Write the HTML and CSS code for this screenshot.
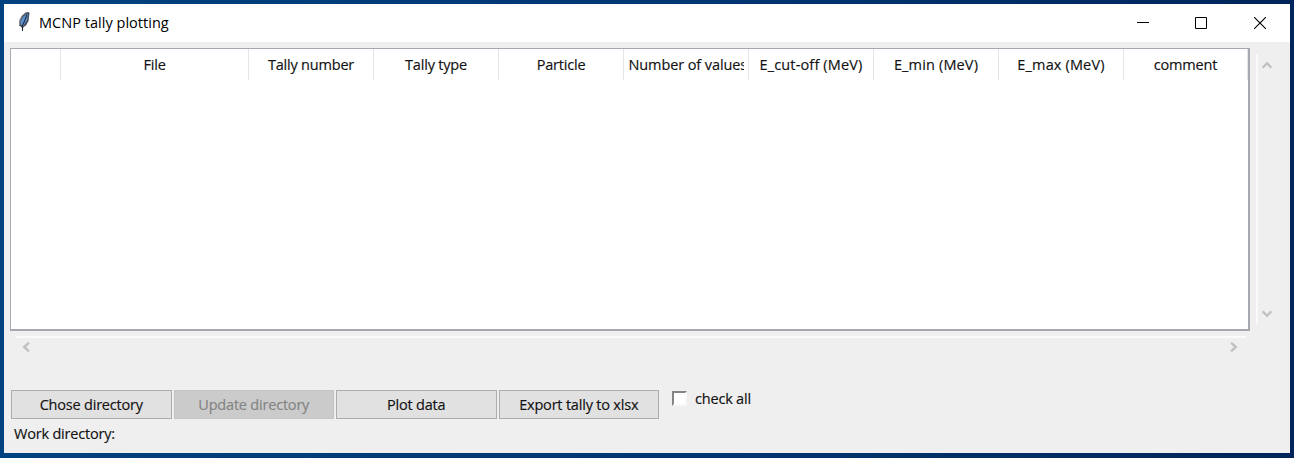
FILE: index.html
```html
<!DOCTYPE html>
<html lang="en">
<head>
<meta charset="utf-8">
<title>MCNP tally plotting</title>
<link rel="stylesheet" href="styles.css">
</head>
<body>
<div class="window">
  <header class="titlebar">
    <svg class="feather" width="16" height="22" viewBox="0 0 16 22">
      <path d="M10 1.5 L12.5 1 L13.5 2 L12.5 10 L10 14.5 L7.5 16 L6.5 20 L5.5 16 L3 14.5 L3.5 9 L6 4.5Z" fill="#454b55"/>
      <path d="M10.5 3 L12 3 L11 9.5 L7.5 14.5 L4.5 13.5 L5 9.5 L7.5 5.5Z" fill="#5b91cf"/>
      <path d="M11 3.5 L9 9 L6.5 14.5 L6.5 20" fill="none" stroke="#142033" stroke-width="1"/>
      <path d="M3.5 14 L4 9 L6.5 4.5 L10 1.5" fill="none" stroke="#8d9198" stroke-width="1"/>
    </svg>
    <h1 class="title">MCNP tally plotting</h1>
    <div class="controls">
      <svg width="12" height="12" viewBox="0 0 12 12"><path d="M0 5.5H12" stroke="#000"/></svg>
      <svg width="12" height="12" viewBox="0 0 12 12"><path d="M.5 .5H11.5V11.5H.5Z" fill="none" stroke="#000"/></svg>
      <svg width="12" height="12" viewBox="0 0 12 12"><path d="M0 0L12 12M12 0L0 12" stroke="#000" stroke-width="1.1"/></svg>
    </div>
  </header>
  <main class="content">
    <div class="table-area">
      <div class="table">
        <div class="head">
          <div class="col"></div>
          <div class="col">File</div>
          <div class="col">Tally number</div>
          <div class="col">Tally type</div>
          <div class="col">Particle</div>
          <div class="col"><span class="clip">Number of values</span></div>
          <div class="col energy">E_cut-off (MeV)</div>
          <div class="col energy">E_min (MeV)</div>
          <div class="col energy">E_max (MeV)</div>
          <div class="col">comment</div>
        </div>
      </div>
      <div class="vscroll">
        <svg width="10" height="8" viewBox="0 0 10 8"><path d="M.7 6.7L5 2.2L9.3 6.7" class="arrow"/></svg>
        <svg width="10" height="8" viewBox="0 0 10 8"><path d="M.7 1.3L5 5.8L9.3 1.3" class="arrow"/></svg>
      </div>
    </div>
    <div class="hscroll">
      <svg width="8" height="10" viewBox="0 0 8 10"><path d="M6.9 .7L2.2 5L6.9 9.3" class="arrow"/></svg>
      <svg width="8" height="10" viewBox="0 0 8 10"><path d="M1.1 .7L5.8 5L1.1 9.3" class="arrow"/></svg>
    </div>
    <div class="actions">
      <button class="btn">Chose directory</button>
      <button class="btn" disabled>Update directory</button>
      <button class="btn">Plot data</button>
      <button class="btn">Export tally to xlsx</button>
      <label class="check"><span class="box"></span><span>check all</span></label>
    </div>
    <div class="status">Work directory:</div>
  </main>
</div>
</body>
</html>
```
FILE: styles.css
```css
* { box-sizing: border-box; }
body {
  margin: 0;
  width: 1294px;
  height: 458px;
  padding: 4px 4px 5px;
  background: linear-gradient(90deg, #00427f, #003672 55%, #00255a);
  font: 14.5px/20px "Open Sans", "Noto Sans", sans-serif;
  letter-spacing: -0.2px;
  color: #111;
  overflow: hidden;
}
svg { display: block; flex: none; }
.window {
  height: 449px;
  background: #efefef;
}
.titlebar {
  display: flex;
  align-items: center;
  height: 38px;
  padding: 0 24px 0 12px;
  background: #fff;
}
.feather { margin-top: -2px; }
.title {
  margin: 0 auto 0 7px;
  font-size: 14.5px;
  font-weight: 400;
  letter-spacing: 0.03px;
  color: #000;
}
.controls { display: flex; gap: 47px; }
.controls svg:first-child { margin-right: -1px; }
.content {
  padding: 6px 6px 0;
  -webkit-text-stroke: 0.15px;
}
.table-area { display: flex; gap: 6px; }
.table {
  width: 1240px;
  height: 283px;
  border: 2px solid #a5a8b0;
  border-width: 1px 2px 2px 1px;
  background: #fff;
}
.head {
  display: grid;
  grid-template-columns: 50px 188px repeat(8, 125px);
  width: 1238px;
  height: 31px;
}
.col {
  display: flex;
  justify-content: center;
  padding-top: 6px;
  border-right: 1px solid #e5e5e5;
  white-space: nowrap;
}
.col:last-child { width: 124px; }
.energy { letter-spacing: 0.15px; }
.clip {
  width: 115px;
  overflow: hidden;
  letter-spacing: -0.1px;
}
.vscroll {
  display: flex;
  flex-direction: column;
  justify-content: space-between;
  width: 20px;
  height: 270px;
  margin-top: 6px;
  padding: 7px 0 6px 4px;
  border-left: 2px solid #fafafa;
}
.arrow { fill: none; stroke: #c1c1c1; stroke-width: 2.4; }
.hscroll {
  display: flex;
  justify-content: space-between;
  width: 1230px;
  height: 20px;
  margin: 5px 0 0 6px;
  padding: 4px 8px 0 6px;
  border-top: 2px solid #fbfbfb;
}
.actions {
  display: flex;
  gap: 2px;
  margin: 34px 0 0 1px;
}
.btn {
  width: 160.5px;
  height: 29px;
  padding: 1px 0 0;
  border: 1px solid #adadad;
  background: #e1e1e1;
  color: #111;
  font: inherit;
  letter-spacing: inherit;
}
.btn:disabled {
  border-color: #c4c4c4;
  background: #cbcbcb;
  color: #838383;
}
.check {
  display: flex;
  gap: 8px;
  height: 16px;
  margin-left: 11px;
  line-height: 18px;
}
.box {
  width: 15px;
  height: 15px;
  margin-top: 1px;
  border: 2px solid;
  border-color: #858585 #f8f8f8 #f8f8f8 #858585;
  background: #fff;
}
.status { margin: 5px 0 0 4px; }
```
